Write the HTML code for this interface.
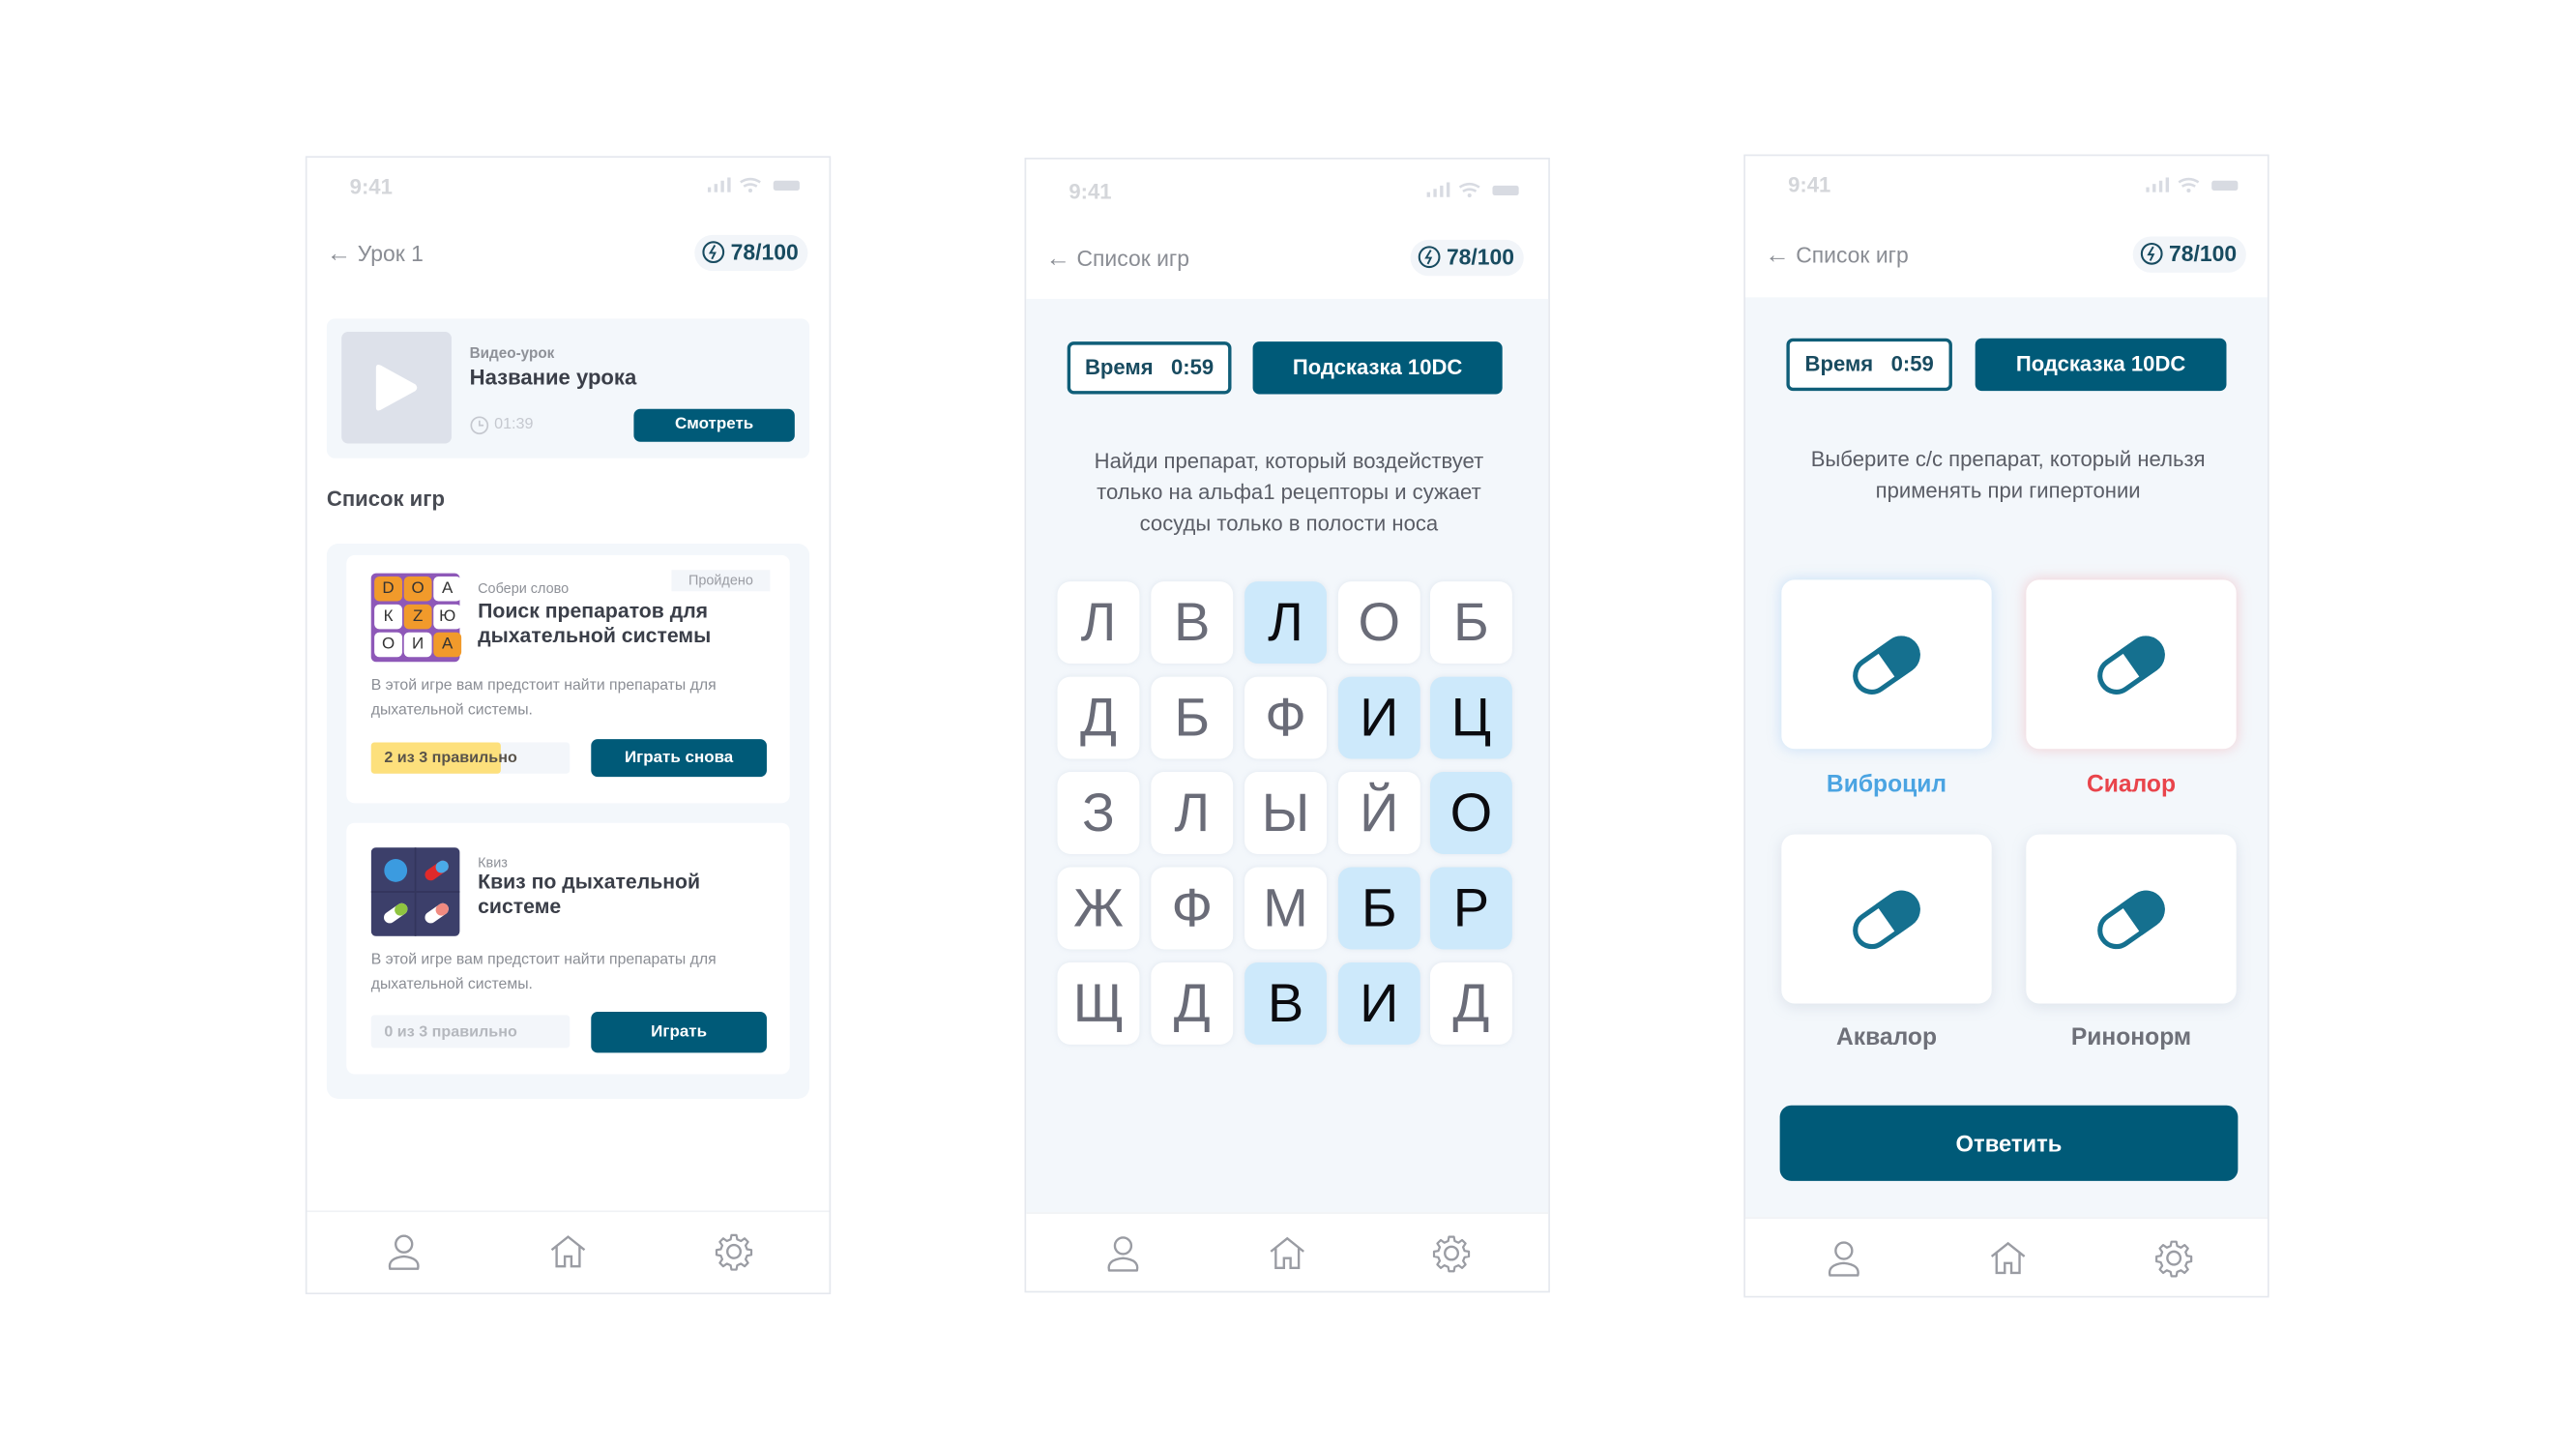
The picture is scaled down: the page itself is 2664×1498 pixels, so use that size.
<!DOCTYPE html>
<html><head><meta charset="utf-8">
<style>
*{margin:0;padding:0;box-sizing:border-box}
html,body{width:2664px;height:1498px;overflow:hidden;background:#fff}
#w{position:absolute;left:0;top:0;width:1570px;height:882px;transform:scale(1.698);transform-origin:0 0;font-family:"Liberation Sans",sans-serif}
.a{position:absolute}
.ph{position:absolute;background:#fff;border:1px solid #e5e8ee;overflow:hidden}
.st{position:absolute;left:26px;font-size:13px;color:#d4d6da;font-weight:bold}
.sig{position:absolute;right:14px;width:60px;height:10px}
.hd{position:absolute;left:12px;font-size:13.5px;color:#8a8d94}
.bd{position:absolute;height:22px;background:#f2f5f9;border-radius:11px;font-size:13.5px;font-weight:bold;color:#184b60;padding:3px 6px 0 22px}
.bd svg{position:absolute;left:4px;top:3px}
.btn{position:absolute;background:#005a78;color:#fff;font-weight:bold;text-align:center;border-radius:4px}
.gray{color:#8e9198}
.nav{position:absolute;left:0;right:0;bottom:0;height:50px;background:#fff;border-top:1px solid #f0f2f5}
.nav svg{position:absolute;top:12px}
.cell{position:absolute;width:50px;height:50px;background:#fff;border-radius:8px;font-size:33px;color:#6a6c78;text-align:center;line-height:50px;box-shadow:0 0 3px rgba(200,210,225,.4)}
.cell.h{background:#cde9fb;color:#0b0b0f}
.pc{position:absolute;width:128px;height:103px;background:#fff;border-radius:8px;box-shadow:0 2px 8px rgba(160,170,190,.25)}
.pc svg{position:absolute;left:39px;top:27px}
.lb{position:absolute;width:128px;text-align:center;font-weight:bold;font-size:14.5px;color:#6e7079}
.lt{position:absolute;width:17px;height:15px;border-radius:3px;font-size:10px;text-align:center;line-height:15px;color:#333;background:#fff}
.lt.o{background:#f19a2b}
</style></head><body><div id="w">

<!-- PHONE 1 -->
<div class="ph" style="left:186px;top:95px;width:320px;height:693px">
 <div class="st" style="top:10px">9:41</div>
 <svg class="sig" style="top:12px" viewBox="0 0 60 10"><rect x="0" y="6" width="2" height="3" fill="#d8dbe2"/><rect x="4" y="4" width="2" height="5" fill="#d8dbe2"/><rect x="8" y="2" width="2" height="7" fill="#d8dbe2"/><rect x="12" y="0" width="2" height="9" fill="#d8dbe2"/><path d="M20 3 Q26 -1 32 3 M22 5.5 Q26 3 30 5.5" stroke="#d8dbe2" stroke-width="1.5" fill="none"/><circle cx="26" cy="8" r="1.2" fill="#d8dbe2"/><rect x="40" y="2" width="16" height="6" rx="1.5" fill="#d8dbe2"/></svg>
 <div class="hd" style="top:50px"><span style="font-size:15px">&#8592;</span> Урок 1</div>
 <div class="bd" style="left:236px;top:47px"><svg width="15" height="15" viewBox="0 0 16 16"><circle cx="8" cy="8" r="6.5" stroke="#184b60" stroke-width="1.3" fill="none"/><path d="M9 3.5 L6 8.5 H9 L7 12.5" stroke="#184b60" stroke-width="1.2" fill="none"/></svg>78/100</div>
 <div class="a" style="left:12px;top:98px;width:294px;height:85px;background:#f3f7fb;border-radius:5px"></div>
 <div class="a" style="left:21px;top:106px;width:67px;height:68px;background:#dde1ea;border-radius:4px"></div>
 <svg class="a" style="left:40px;top:125px" width="30" height="30" viewBox="0 0 30 30"><path d="M2 3 Q2 0 5 1.5 L26 13 Q28 15 26 17 L5 28.5 Q2 30 2 27 Z" fill="#fff"/></svg>
 <div class="a gray" style="left:99px;top:114px;font-size:9px;font-weight:bold">Видео-урок</div>
 <div class="a" style="left:99px;top:126px;font-size:13px;font-weight:bold;color:#3a3e48">Название урока</div>
 <svg class="a" style="left:99px;top:157px" width="12" height="12" viewBox="0 0 12 12"><circle cx="6" cy="6" r="5" stroke="#c5c8cf" fill="none"/><path d="M6 3 V6 H8.5" stroke="#c5c8cf" fill="none"/></svg>
 <div class="a" style="left:114px;top:157px;font-size:9.5px;color:#c5c8cf">01:39</div>
 <div class="btn" style="left:199px;top:153px;width:98px;height:20px;font-size:10px;line-height:20px">Смотреть</div>
 <div class="a" style="left:12px;top:200px;font-size:13px;font-weight:bold;color:#484b53">Список игр</div>
 <div class="a" style="left:12px;top:235px;width:294px;height:338px;background:#f3f7fb;border-radius:7px"></div>
 <!-- card1 -->
 <div class="a" style="left:24px;top:242px;width:270px;height:151px;background:#fff;border-radius:5px"></div>
 <div class="a" style="left:39px;top:253px;width:54px;height:54px;background:#8e58b8;border-radius:3px"></div>
 <div class="lt o" style="left:41px;top:255px">D</div><div class="lt o" style="left:59px;top:255px">O</div><div class="lt" style="left:77px;top:255px">A</div>
 <div class="lt" style="left:41px;top:272px">К</div><div class="lt o" style="left:59px;top:272px">Z</div><div class="lt" style="left:77px;top:272px">Ю</div>
 <div class="lt" style="left:41px;top:289px">О</div><div class="lt" style="left:59px;top:289px">И</div><div class="lt o" style="left:77px;top:289px">А</div>
 <div class="a gray" style="left:104px;top:257px;font-size:8.5px">Собери слово</div>
 <div class="a" style="left:222px;top:251px;width:60px;height:13px;background:#f3f6fa;font-size:8.5px;color:#9a9ca3;text-align:center;line-height:13px">Пройдено</div>
 <div class="a" style="left:104px;top:269px;font-size:12.5px;font-weight:bold;color:#3a3e48;line-height:15px">Поиск препаратов для<br>дыхательной системы</div>
 <div class="a" style="left:39px;top:314px;font-size:9.3px;color:#8a8d94;line-height:15px">В этой игре вам предстоит найти препараты для<br>дыхательной системы.</div>
 <div class="a" style="left:39px;top:356px;width:121px;height:19px;background:#f3f6fa;border-radius:2px"></div>
 <div class="a" style="left:39px;top:356px;width:79px;height:19px;background:#fde07c;border-radius:2px"></div>
 <div class="a" style="left:47px;top:360px;font-size:9.5px;font-weight:bold;color:#59534a">2 из 3 правильно</div>
 <div class="btn" style="left:173px;top:354px;width:107px;height:23px;font-size:10px;line-height:23px">Играть снова</div>
 <!-- card2 -->
 <div class="a" style="left:24px;top:405px;width:270px;height:153px;background:#fff;border-radius:5px"></div>
 <svg class="a" style="left:39px;top:420px" width="54" height="54" viewBox="0 0 54 54"><rect width="54" height="54" rx="3" fill="#3c3f6a"/><path d="M27 0V54M0 27H54" stroke="#33365c" stroke-width="1"/><circle cx="15" cy="14" r="7" fill="#3b9be0"/><g transform="rotate(-35 40 14)"><rect x="32" y="10.5" width="16" height="7" rx="3.5" fill="#e02a2a"/><rect x="40" y="10.5" width="8" height="7" rx="3.5" fill="#4aaae8"/></g><g transform="rotate(-35 15 40)"><rect x="7" y="36.5" width="16" height="7" rx="3.5" fill="#fff"/><rect x="15" y="36.5" width="8" height="7" rx="3.5" fill="#8fc440"/></g><g transform="rotate(-35 40 40)"><rect x="32" y="36.5" width="16" height="7" rx="3.5" fill="#fff"/><rect x="40" y="36.5" width="8" height="7" rx="3.5" fill="#f08a80"/></g></svg>
 <div class="a gray" style="left:104px;top:424px;font-size:8.5px">Квиз</div>
 <div class="a" style="left:104px;top:434px;font-size:12.5px;font-weight:bold;color:#3a3e48;line-height:15px">Квиз по дыхательной<br>системе</div>
 <div class="a" style="left:39px;top:481px;font-size:9.3px;color:#8a8d94;line-height:15px">В этой игре вам предстоит найти препараты для<br>дыхательной системы.</div>
 <div class="a" style="left:39px;top:522px;width:121px;height:20px;background:#f3f6fa;border-radius:2px"></div>
 <div class="a" style="left:47px;top:527px;font-size:9.5px;font-weight:bold;color:#b5b8be">0 из 3 правильно</div>
 <div class="btn" style="left:173px;top:520px;width:107px;height:25px;font-size:10px;line-height:25px">Играть</div>
 <div class="nav"><svg style="left:47px" width="24" height="24" viewBox="0 0 24 24"><circle cx="12" cy="7.5" r="5" stroke="#9a9ca3" stroke-width="1.4" fill="none"/><path d="M3.5 22.5 Q2 16 12 15 Q22 16 20.5 22.5 Z" stroke="#9a9ca3" stroke-width="1.4" fill="none" stroke-linejoin="round"/></svg><svg style="left:147px" width="24" height="24" viewBox="0 0 24 24"><path d="M2 11 L12 3 L22 11 M5 9 V21 H10 V15 H14 V21 H19 V9" stroke="#9a9ca3" stroke-width="1.4" fill="none"/></svg><svg style="left:248px" width="24" height="24" viewBox="0 0 24 24"><circle cx="12" cy="12" r="4" stroke="#9a9ca3" stroke-width="1.4" fill="none"/><path d="M10.5 2 H13.5 L14 4.6 L16.3 5.6 L18.5 4 L20.6 6.1 L19.1 8.3 L20 10.6 L22.6 11 V14 L20 14.5 L19.1 16.7 L20.6 18.9 L18.5 21 L16.3 19.4 L14 20.4 L13.5 23 H10.5 L10 20.4 L7.7 19.4 L5.5 21 L3.4 18.9 L4.9 16.7 L4 14.5 L1.4 14 V11 L4 10.6 L4.9 8.3 L3.4 6.1 L5.5 4 L7.7 5.6 L10 4.6 Z" stroke="#9a9ca3" stroke-width="1.3" fill="none" stroke-linejoin="round"/></svg></div>
</div>

<!-- PHONE 2 -->
<div class="ph" style="left:624px;top:96px;width:320px;height:691px">
 <div class="a" style="left:0;top:85px;width:320px;height:560px;background:#f3f7fb"></div>
 <div class="st" style="top:12px">9:41</div>
 <svg class="sig" style="top:14px" viewBox="0 0 60 10"><rect x="0" y="6" width="2" height="3" fill="#d8dbe2"/><rect x="4" y="4" width="2" height="5" fill="#d8dbe2"/><rect x="8" y="2" width="2" height="7" fill="#d8dbe2"/><rect x="12" y="0" width="2" height="9" fill="#d8dbe2"/><path d="M20 3 Q26 -1 32 3 M22 5.5 Q26 3 30 5.5" stroke="#d8dbe2" stroke-width="1.5" fill="none"/><circle cx="26" cy="8" r="1.2" fill="#d8dbe2"/><rect x="40" y="2" width="16" height="6" rx="1.5" fill="#d8dbe2"/></svg>
 <div class="hd" style="top:52px"><span style="font-size:15px">&#8592;</span> Список игр</div>
 <div class="bd" style="left:234px;top:49px"><svg width="15" height="15" viewBox="0 0 16 16"><circle cx="8" cy="8" r="6.5" stroke="#184b60" stroke-width="1.3" fill="none"/><path d="M9 3.5 L6 8.5 H9 L7 12.5" stroke="#184b60" stroke-width="1.2" fill="none"/></svg>78/100</div>
 <div class="a" style="left:25px;top:111px;width:100px;height:32px;background:#fff;border:2px solid #0f5e78;border-radius:4px;font-size:13px;font-weight:bold;color:#184b60;text-align:center;line-height:28px">Время&nbsp;&nbsp;&nbsp;0:59</div>
 <div class="btn" style="left:138px;top:111px;width:152px;height:32px;font-size:13px;line-height:32px;font-weight:bold">Подсказка 10DC</div>
 <div class="a" style="left:0;top:174px;width:320px;text-align:center;font-size:13px;color:#5a5d66;line-height:19px">Найди препарат, который воздействует<br>только на альфа1 рецепторы и сужает<br>сосуды только в полости носа</div>
 <div class="cell" style="left:19px;top:257px">Л</div><div class="cell" style="left:76px;top:257px">В</div><div class="cell h" style="left:133px;top:257px">Л</div><div class="cell" style="left:190px;top:257px">О</div><div class="cell" style="left:246px;top:257px">Б</div>
 <div class="cell" style="left:19px;top:315px">Д</div><div class="cell" style="left:76px;top:315px">Б</div><div class="cell" style="left:133px;top:315px">Ф</div><div class="cell h" style="left:190px;top:315px">И</div><div class="cell h" style="left:246px;top:315px">Ц</div>
 <div class="cell" style="left:19px;top:373px">З</div><div class="cell" style="left:76px;top:373px">Л</div><div class="cell" style="left:133px;top:373px">Ы</div><div class="cell" style="left:190px;top:373px">Й</div><div class="cell h" style="left:246px;top:373px">О</div>
 <div class="cell" style="left:19px;top:431px">Ж</div><div class="cell" style="left:76px;top:431px">Ф</div><div class="cell" style="left:133px;top:431px">М</div><div class="cell h" style="left:190px;top:431px">Б</div><div class="cell h" style="left:246px;top:431px">Р</div>
 <div class="cell" style="left:19px;top:489px">Щ</div><div class="cell" style="left:76px;top:489px">Д</div><div class="cell h" style="left:133px;top:489px">В</div><div class="cell h" style="left:190px;top:489px">И</div><div class="cell" style="left:246px;top:489px">Д</div>
 <div class="nav" style="height:48px"><svg style="left:47px" width="24" height="24" viewBox="0 0 24 24"><circle cx="12" cy="7.5" r="5" stroke="#9a9ca3" stroke-width="1.4" fill="none"/><path d="M3.5 22.5 Q2 16 12 15 Q22 16 20.5 22.5 Z" stroke="#9a9ca3" stroke-width="1.4" fill="none" stroke-linejoin="round"/></svg><svg style="left:147px" width="24" height="24" viewBox="0 0 24 24"><path d="M2 11 L12 3 L22 11 M5 9 V21 H10 V15 H14 V21 H19 V9" stroke="#9a9ca3" stroke-width="1.4" fill="none"/></svg><svg style="left:247px" width="24" height="24" viewBox="0 0 24 24"><circle cx="12" cy="12" r="4" stroke="#9a9ca3" stroke-width="1.4" fill="none"/><path d="M10.5 2 H13.5 L14 4.6 L16.3 5.6 L18.5 4 L20.6 6.1 L19.1 8.3 L20 10.6 L22.6 11 V14 L20 14.5 L19.1 16.7 L20.6 18.9 L18.5 21 L16.3 19.4 L14 20.4 L13.5 23 H10.5 L10 20.4 L7.7 19.4 L5.5 21 L3.4 18.9 L4.9 16.7 L4 14.5 L1.4 14 V11 L4 10.6 L4.9 8.3 L3.4 6.1 L5.5 4 L7.7 5.6 L10 4.6 Z" stroke="#9a9ca3" stroke-width="1.3" fill="none" stroke-linejoin="round"/></svg></div>
</div>

<!-- PHONE 3 -->
<div class="ph" style="left:1062px;top:94px;width:320px;height:696px">
 <div class="a" style="left:0;top:86px;width:320px;height:562px;background:#f3f7fb"></div>
 <div class="st" style="top:10px">9:41</div>
 <svg class="sig" style="top:13px" viewBox="0 0 60 10"><rect x="0" y="6" width="2" height="3" fill="#d8dbe2"/><rect x="4" y="4" width="2" height="5" fill="#d8dbe2"/><rect x="8" y="2" width="2" height="7" fill="#d8dbe2"/><rect x="12" y="0" width="2" height="9" fill="#d8dbe2"/><path d="M20 3 Q26 -1 32 3 M22 5.5 Q26 3 30 5.5" stroke="#d8dbe2" stroke-width="1.5" fill="none"/><circle cx="26" cy="8" r="1.2" fill="#d8dbe2"/><rect x="40" y="2" width="16" height="6" rx="1.5" fill="#d8dbe2"/></svg>
 <div class="hd" style="top:52px"><span style="font-size:15px">&#8592;</span> Список игр</div>
 <div class="bd" style="left:236px;top:49px"><svg width="15" height="15" viewBox="0 0 16 16"><circle cx="8" cy="8" r="6.5" stroke="#184b60" stroke-width="1.3" fill="none"/><path d="M9 3.5 L6 8.5 H9 L7 12.5" stroke="#184b60" stroke-width="1.2" fill="none"/></svg>78/100</div>
 <div class="a" style="left:25px;top:111px;width:101px;height:32px;background:#fff;border:2px solid #0f5e78;border-radius:4px;font-size:13px;font-weight:bold;color:#184b60;text-align:center;line-height:28px">Время&nbsp;&nbsp;&nbsp;0:59</div>
 <div class="btn" style="left:140px;top:111px;width:153px;height:32px;font-size:13px;line-height:32px">Подсказка 10DC</div>
 <div class="a" style="left:0;top:175px;width:320px;text-align:center;font-size:13px;color:#5a5d66;line-height:19px">Выберите с/с препарат, который нельзя<br>применять при гипертонии</div>
 <div class="pc" style="left:22px;top:258px;box-shadow:0 0 8px rgba(120,180,240,.35)"><svg width="50" height="50" viewBox="0 0 50 50"><g transform="rotate(-35 25 25)"><rect x="4" y="15" width="42" height="20" rx="10" fill="#fff" stroke="#15708f" stroke-width="3"/><path d="M25 13.5 H36 A11.5 11.5 0 0 1 36 36.5 H25 Z" fill="#15708f"/></g></svg></div>
 <div class="pc" style="left:171px;top:258px;box-shadow:0 0 8px rgba(240,140,150,.4)"><svg width="50" height="50" viewBox="0 0 50 50"><g transform="rotate(-35 25 25)"><rect x="4" y="15" width="42" height="20" rx="10" fill="#fff" stroke="#15708f" stroke-width="3"/><path d="M25 13.5 H36 A11.5 11.5 0 0 1 36 36.5 H25 Z" fill="#15708f"/></g></svg></div>
 <div class="lb" style="left:22px;top:375px;color:#4ba4e2">Виброцил</div>
 <div class="lb" style="left:171px;top:375px;color:#e9444b">Сиалор</div>
 <div class="pc" style="left:22px;top:413px"><svg width="50" height="50" viewBox="0 0 50 50"><g transform="rotate(-35 25 25)"><rect x="4" y="15" width="42" height="20" rx="10" fill="#fff" stroke="#15708f" stroke-width="3"/><path d="M25 13.5 H36 A11.5 11.5 0 0 1 36 36.5 H25 Z" fill="#15708f"/></g></svg></div>
 <div class="pc" style="left:171px;top:413px"><svg width="50" height="50" viewBox="0 0 50 50"><g transform="rotate(-35 25 25)"><rect x="4" y="15" width="42" height="20" rx="10" fill="#fff" stroke="#15708f" stroke-width="3"/><path d="M25 13.5 H36 A11.5 11.5 0 0 1 36 36.5 H25 Z" fill="#15708f"/></g></svg></div>
 <div class="lb" style="left:22px;top:529px">Аквалор</div>
 <div class="lb" style="left:171px;top:529px">Ринонорм</div>
 <div class="btn" style="left:21px;top:578px;width:279px;height:46px;font-size:14px;line-height:46px;border-radius:7px">Ответить</div>
 <div class="nav" style="height:48px"><svg style="left:48px" width="24" height="24" viewBox="0 0 24 24"><circle cx="12" cy="7.5" r="5" stroke="#9a9ca3" stroke-width="1.4" fill="none"/><path d="M3.5 22.5 Q2 16 12 15 Q22 16 20.5 22.5 Z" stroke="#9a9ca3" stroke-width="1.4" fill="none" stroke-linejoin="round"/></svg><svg style="left:148px" width="24" height="24" viewBox="0 0 24 24"><path d="M2 11 L12 3 L22 11 M5 9 V21 H10 V15 H14 V21 H19 V9" stroke="#9a9ca3" stroke-width="1.4" fill="none"/></svg><svg style="left:249px" width="24" height="24" viewBox="0 0 24 24"><circle cx="12" cy="12" r="4" stroke="#9a9ca3" stroke-width="1.4" fill="none"/><path d="M10.5 2 H13.5 L14 4.6 L16.3 5.6 L18.5 4 L20.6 6.1 L19.1 8.3 L20 10.6 L22.6 11 V14 L20 14.5 L19.1 16.7 L20.6 18.9 L18.5 21 L16.3 19.4 L14 20.4 L13.5 23 H10.5 L10 20.4 L7.7 19.4 L5.5 21 L3.4 18.9 L4.9 16.7 L4 14.5 L1.4 14 V11 L4 10.6 L4.9 8.3 L3.4 6.1 L5.5 4 L7.7 5.6 L10 4.6 Z" stroke="#9a9ca3" stroke-width="1.3" fill="none" stroke-linejoin="round"/></svg></div>
</div>

</div></body></html>
